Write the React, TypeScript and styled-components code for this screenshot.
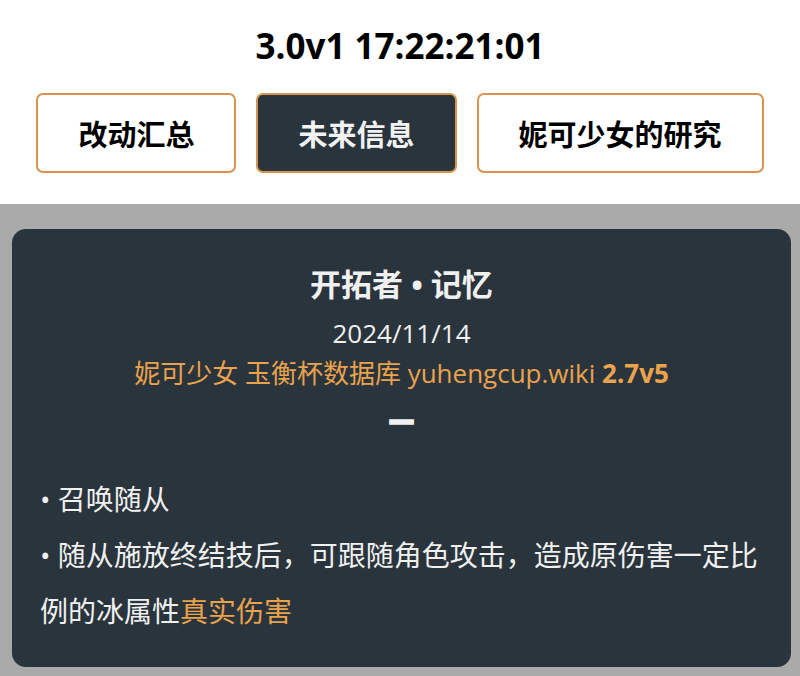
import React from 'react';
import styled, { createGlobalStyle } from 'styled-components';

const GlobalStyle = createGlobalStyle`
  html, body {
    margin: 0;
    padding: 0;
    background: #aaaaaa;
  }
  body {
    font-family: 'Open Sans', 'Noto Sans CJK SC', sans-serif;
  }
`;

const dark = '#29343c';
const accent = '#d6944d';
const orange = '#eaa24c';

const Header = styled.header`
  background: #ffffff;
  padding: 22px 0 31px;
  display: flex;
  flex-direction: column;
  align-items: center;
`;

const Title = styled.h1`
  margin: 0;
  font-size: 35px;
  line-height: 48px;
  font-weight: 700;
  color: #000;
`;

const Tabs = styled.nav`
  margin-top: 23px;
  display: flex;
  gap: 20px;
`;

const Tab = styled.button<{ $active?: boolean }>`
  height: 80px;
  padding: 0 40px;
  box-sizing: border-box;
  border: 2.5px solid ${accent};
  border-radius: 7px;
  background: ${(p) => (p.$active ? dark : '#fff')};
  color: ${(p) => (p.$active ? '#f2f2f2' : '#000')};
  font-family: 'Noto Sans CJK SC', sans-serif;
  font-size: 29px;
  font-weight: 700;
  cursor: pointer;
`;

const Main = styled.main`
  padding: 25px 9px 9px 12px;
`;

const Card = styled.section`
  background: ${dark};
  border-radius: 14px;
  padding: 34px 28px 28px;
  color: #f0f0f0;
`;

const CardHead = styled.div`
  display: flex;
  flex-direction: column;
  align-items: center;
`;

const CardTitle = styled.h2`
  margin: 0;
  font-family: 'Open Sans', 'Noto Sans CJK SC', sans-serif;
  font-size: 31px;
  line-height: 42px;
  font-weight: 700;
`;

const Line = styled.div<{ $color?: string }>`
  font-size: 26px;
  line-height: 40px;
  color: ${(p) => p.$color || '#f0f0f0'};
`;

const DateLine = styled(Line)`
  margin-top: 8px;
`;

const Strong = styled.b`
  font-weight: 700;
`;

const Dash = styled.div`
  margin-top: 8px;
  font-family: 'Noto Sans CJK SC', sans-serif;
  font-size: 25px;
  line-height: 40px;
  font-weight: 900;
  -webkit-text-stroke: 1.5px #f0f0f0;
`;

const List = styled.div`
  margin-top: 30px;
  font-family: 'Open Sans', 'Noto Sans CJK SC', sans-serif;
  font-size: 28px;
  line-height: 56px;
`;

const Hl = styled.span`
  color: ${orange};
`;

export default function App() {
  return (
    <>
      <GlobalStyle />
      <Header>
        <Title>3.0v1 17:22:21:01</Title>
        <Tabs>
          <Tab>改动汇总</Tab>
          <Tab $active>未来信息</Tab>
          <Tab>妮可少女的研究</Tab>
        </Tabs>
      </Header>
      <Main>
        <Card>
          <CardHead>
            <CardTitle>开拓者 • 记忆</CardTitle>
            <DateLine>2024/11/14</DateLine>
            <Line $color={orange}>
              妮可少女 玉衡杯数据库 yuhengcup.wiki <Strong>2.7v5</Strong>
            </Line>
            <Dash>一</Dash>
          </CardHead>
          <List>
            <div>• 召唤随从</div>
            <div>
              • 随从施放终结技后，可跟随角色攻击，造成原伤害一定比例的冰属性<Hl>真实伤害</Hl>
            </div>
          </List>
        </Card>
      </Main>
    </>
  );
}
